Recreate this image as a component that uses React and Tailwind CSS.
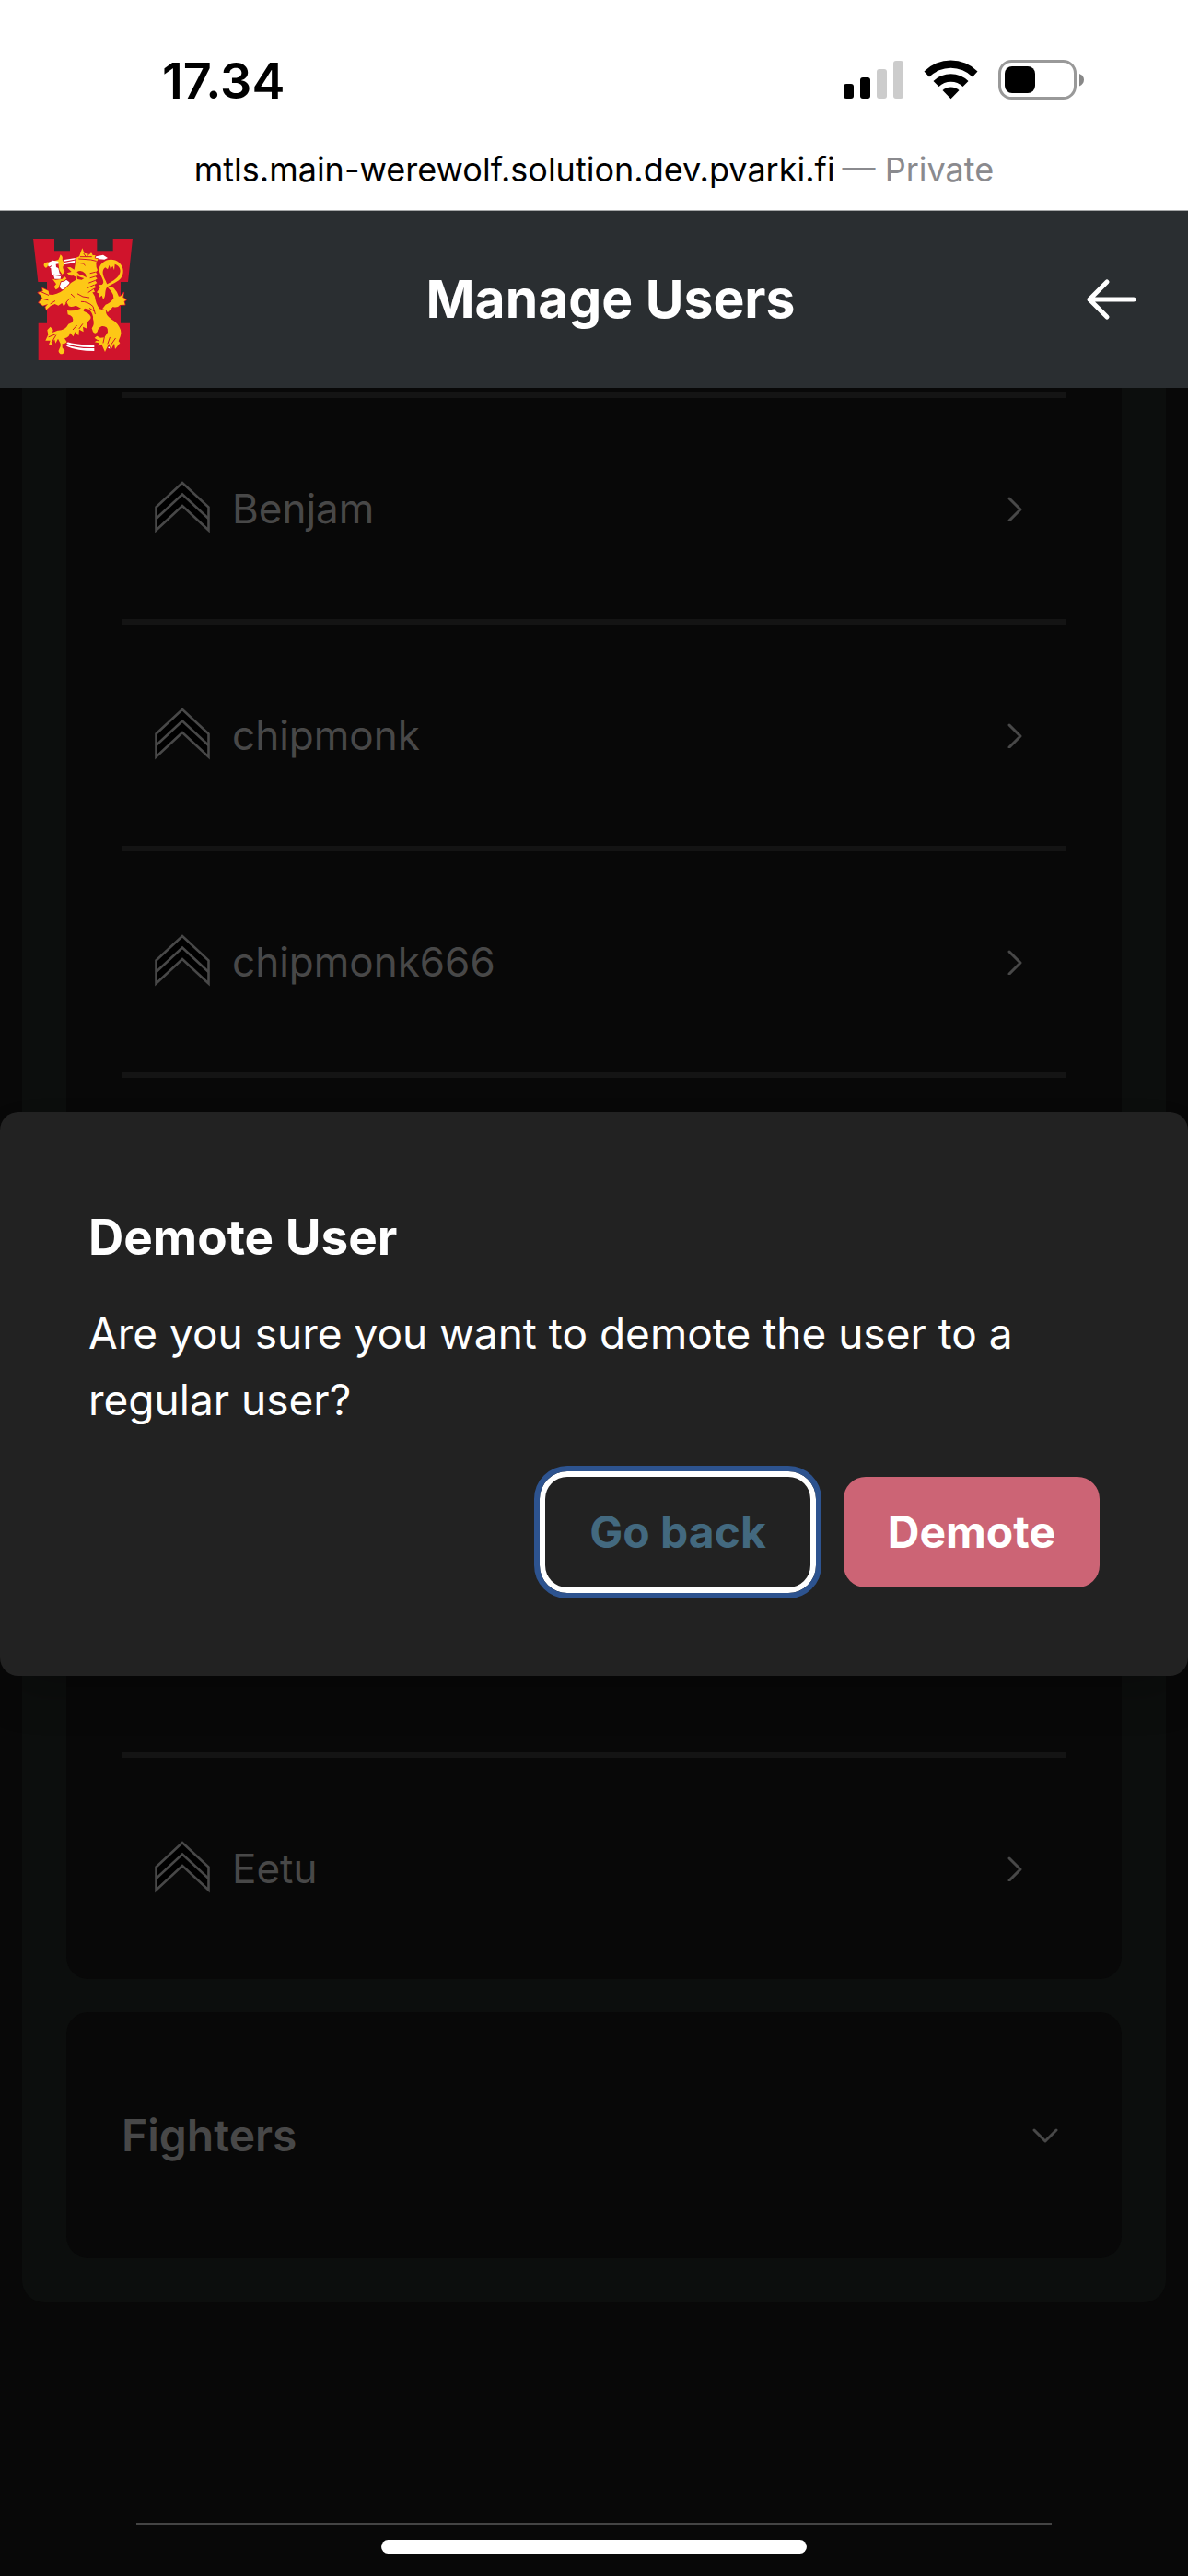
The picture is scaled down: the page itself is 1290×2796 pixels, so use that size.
const sans = "font-[Inter,'Liberation_Sans',sans-serif]";

function Lion() {
  return (
    <svg viewBox="0 0 384 510" className="h-[170px] w-32" role="img" aria-label="Coat of arms">
      <path fill="#d0142c" d="M48 57H117V97H168V57H256V97H308V57H372L357 198H333V332H363V453H65V332H93V198H64Z" />
      <g fill="#fff">
        <path d="M145 127L190 119V124L145 132ZM147 136L190 127L186 135L148 142ZM242 117L276 110L291 120L280 125L262 124Z" />
        <path d="M131 211L140 194L154 190L166 199L167 208L157 212L150 224L141 222Z" />
        <path d="M154 392Q198 405 247 403V411Q190 413 150 397ZM150 401Q194 416 247 414V423Q190 423 160 409ZM290 411L302 407L298 416Z" />
      </g>
      <g fill="#fdc816" stroke="#d0142c" strokeWidth="5" strokeLinejoin="round" paintOrder="stroke">
        <path d="M137 109Q146 116 143 125Q150 135 147 145Q141 152 151 164L143 174L133 159L130 136L117 130L96 145Q92 156 86 150Q80 144 84 138Q90 132 100 134L130 126Q135 117 137 109Z" />
        <path d="M111 188L121 191L143 188L150 180L157 187L149 194L138 196L130 218L122 223L116 214L123 205Z" />
        <path d="M291 216Q302 210 311 218Q322 229 327 245Q338 244 343 233L340 248L351 256L344 262L347 272L331 273Q322 284 308 279L292 296L270 290L284 272Q298 268 310 251Q311 240 302 228Z" />
        <path d="M208 88Q211 95 214 104L232 108Q234 102 239 104L242 111L251 111L248 121L260 124L253 135L254 150L258 160L252 166L257 175L250 180L257 187L249 193L256 201L247 208L253 215L244 220L249 231L241 232L249 245Q251 266 264 286L285 292Q284 308 304 320Q325 331 333 355Q336 366 332 376L326 391L331 397L315 417L312 398L302 418L295 399L285 419L282 426L271 401L260 407L262 397L248 394L257 388L248 380L256 374L267 380L280 379L291 362Q293 351 287 346Q278 341 272 342Q259 347 257 361Q250 369 243 361L239 349Q249 336 243 318Q245 304 230 287L216 284Q209 290 214 294Q240 305 235 318L223 331L224 350L210 344L212 361L198 353L196 373L184 361L179 376L168 364Q166 379 150 382L158 394Q152 401 143 399V412L151 422Q148 434 137 433Q127 426 133 417Q139 407 137 399L129 383L121 398L118 386L107 394L112 406L99 403L104 389L88 389L97 370L94 355L104 344L113 354L111 363L128 356Q152 357 163 335L176 329Q183 310 161 304L159 291Q181 295 204 284L187 275Q173 282 164 277L157 263L148 278L142 267L130 275L119 270L105 276L91 289L88 280L96 270L80 275L66 265L78 252L74 242L64 233L80 228L78 218L98 227L100 239L112 240Q139 235 159 214Q171 198 187 191L190 183L178 177Q168 181 158 169L173 165L159 151L169 150L182 158L185 142L188 119L198 115Z" />
        <path fillRule="evenodd" d="M274 136C291 121 313 123 328 135C344 149 345 172 333 187C318 204 289 208 285 222C281 234 285 247 276 254L272 242L264 248L263 236L255 232L267 215L260 208L272 207C285 199 268 181 264 165C261 153 265 144 274 136ZM283 151C272 159 273 172 281 188C287 199 287 203 290 205C298 200 321 189 328 175C337 160 329 144 314 140L312 160L307 146L300 156L296 143L291 157Z" />
      </g>
      <path fill="#fff" d="M98 135L112 128L130 131L131 139L122 140L123 150L130 153L134 170L139 175L137 188L118 188L115 178L108 172L106 154L97 146Z" />
      <path fill="#d0142c" d="M190 166Q204 156 218 171L222 184L211 178L198 173ZM191 178Q204 184 214 186L206 191L192 189Z" />
      <g fill="none" stroke="#d0142c" strokeWidth="3" strokeLinecap="round">
        <path d="M195 136L211 138L217 144M197 123L236 126L253 130M202 116L238 116M213 106L220 116L229 109M100 150L108 146M116 175L137 178" />
        <path d="M172 238L182 247M193 237L210 246L230 249M205 262Q226 261 243 278L250 302M232 284L245 292M74 252L96 257M76 231L98 241M105 269L119 260M155 265L167 252M178 353L190 340M198 350L209 335M99 377L119 369M112 389L122 372M276 396L280 378M291 399L298 379M302 402L316 382" />
        <path d="M234 170L250 166M234 185L250 180M230 201L248 194M226 217L246 208M228 232L244 221M249 385L262 390" />
      </g>
    </svg>
  );
}

function StatusIcons() {
  return (
    <svg viewBox="0 0 320 100" className="h-[100px] w-[320px]" role="img" aria-label="Signal, Wi-Fi and battery">
      <rect x="36" y="51" width="11" height="16" rx="3" />
      <rect x="54" y="44" width="11" height="23" rx="3" />
      <rect x="72" y="35" width="11" height="32" rx="3" fill="#ccc" />
      <rect x="90" y="26" width="11" height="41" rx="3" fill="#ccc" />
      <path d="M123.500 37.500A41 41 0 0 1 181.500 37.500L176 43.500A33.500 33.500 0 0 0 129 43.500Z" />
      <path d="M133.500 48A27 27 0 0 1 171.500 48L165.500 54A18.500 18.500 0 0 0 139.500 54Z" />
      <path d="M143.500 58A13 13 0 0 1 161.500 58L152.500 67.300Z" />
      <rect x="205.500" y="26.500" width="82" height="40" rx="13" fill="none" stroke="#999" strokeWidth="3" />
      <rect x="211" y="32" width="33" height="29" rx="8" />
      <path d="M292 40Q297 42 297 46.500T292 53.500Z" fill="#888" />
    </svg>
  );
}

function Rank() {
  return (
    <svg viewBox="0 0 60 60" className="size-[60px]" fill="#000" stroke="#484848" strokeWidth="2.6" aria-hidden="true">
      <path d="M1.500 28.500L30 2L58.500 28.500V53.500L30 27L1.500 53.500Z" />
      <path fill="none" d="M1.500 41L30 14.500L58.500 41" />
    </svg>
  );
}

function UserRow({ name }) {
  return (
    <li className="border-b-6 border-[#141414] last:border-b-0">
      <button type="button" className="flex h-60 w-full items-center px-9 text-left">
        <Rank />
        <span className="ml-6 grow text-[44px] leading-[60px]">{name}</span>
        <svg viewBox="0 0 16 28" className="mr-3 h-7 w-4" fill="none" stroke="#484848" strokeWidth="3" strokeLinecap="round" strokeLinejoin="round" aria-hidden="true">
          <path d="M2 3L14 15L2 27" />
        </svg>
      </button>
    </li>
  );
}

export default function App() {
  return (
    <div className={`relative flex h-screen flex-col overflow-hidden bg-[#080808] ${sans} text-[#484848]`}>
      <div className="shrink-0 bg-white text-black">
        <div className="flex h-[140px] items-end justify-between pr-[90px] pl-[176px]">
          <time className="pb-[22px] text-[54px] leading-[60px] font-semibold">17.34</time>
          <StatusIcons />
        </div>
        <p className="flex h-[88px] justify-center gap-2 pt-[22px] text-[36px] leading-[44px]">
          <span>mtls.main-werewolf.solution.dev.pvarki.fi</span>
          <span className="text-[#8a8a8e]">— Private</span>
        </p>
      </div>
      <header className="flex h-[193px] shrink-0 items-center justify-between border-t border-[#a5a7a8] bg-[#2a2e31] pr-14 pl-5 text-white">
        <Lion />
        <h1 className="text-[57px] leading-[72px] font-bold">Manage Users</h1>
        <button type="button" aria-label="Back">
          <svg viewBox="0 0 56 48" className="h-12 w-14" fill="none" stroke="currentColor" strokeWidth="5" strokeLinecap="round" strokeLinejoin="round" aria-hidden="true">
            <path d="M24 5L5 24L24 43M5 24H53" />
          </svg>
        </button>
      </header>

      <main className="mx-6 shrink-0 rounded-b-3xl bg-[#0c0e0d] px-12 pb-12">
        <section className="rounded-b-3xl bg-[#080808] px-[60px] pt-[5px]">
          <ul className="border-t-6 border-[#141414]">
            <UserRow name="Benjam" />
            <UserRow name="chipmonk" />
            <UserRow name="chipmonk666" />
            <li className="h-[738px] border-b-6 border-[#141414]" aria-hidden="true" />
            <UserRow name="Eetu" />
          </ul>
        </section>
        <section className="mt-9 rounded-3xl bg-[#080808]">
          <button type="button" className="flex h-[267px] w-full items-center justify-between pr-[69px] pl-[60px]">
            <span className="text-[48px] leading-[60px] font-semibold">Fighters</span>
            <svg viewBox="0 0 28 18" className="h-[18px] w-7" fill="none" stroke="currentColor" strokeWidth="3" strokeLinecap="round" strokeLinejoin="round" aria-hidden="true">
              <path d="M2 3L14 15L26 3" />
            </svg>
          </button>
        </section>
      </main>
      <footer className="mx-[148px] mt-auto mb-[55px] shrink-0 border-t-3 border-[#444]" />

      <div className="absolute inset-x-0 top-[1207px] rounded-[20px] bg-[#222] px-24 pt-[100px] pb-24 text-white shadow-2xl" role="dialog" aria-modal="true" aria-labelledby="dialog-title">
        <h2 id="dialog-title" className="text-[53px] leading-[72px] font-bold">Demote User</h2>
        <p className="mt-8 text-[46px] leading-[72px]">Are you sure you want to demote the user to a regular user?</p>
        <div className="mt-12 flex justify-end gap-9 text-[48px] leading-[72px] font-bold">
          <button type="button" className="rounded-3xl px-12 py-6 text-[#43697f] ring-6 ring-white outline-6 outline-offset-6 outline-[#2d538f]">Go back</button>
          <button type="button" className="rounded-3xl bg-[#cc6475] px-12 py-6">Demote</button>
        </div>
      </div>
      <div className="absolute inset-x-0 bottom-6 mx-auto h-[15px] w-[462px] rounded-full bg-white" />
    </div>
  );
}
